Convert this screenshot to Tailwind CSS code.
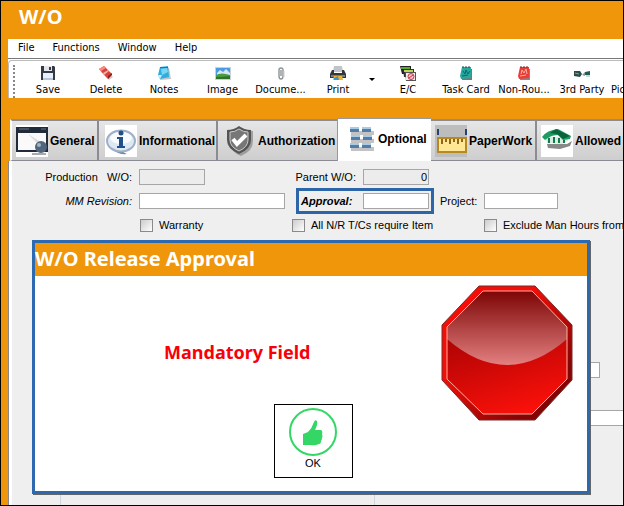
<!DOCTYPE html>
<html lang="en">
<head>
  <meta charset="UTF-8" />
  <meta name="viewport" content="width=device-width, initial-scale=1.0" />
  <title>W/O</title>
  <script src="https://cdn.jsdelivr.net/npm/@tailwindcss/browser@4"></script>
</head>
<body class="h-screen overflow-hidden border border-black bg-[#f0960a] text-black font-['Liberation_Sans',sans-serif]">
  <div class="flex h-full flex-col pl-[7px]">

    <h1 class="h-[38px] shrink-0 pl-[11px] text-[20px] leading-[32px] font-bold text-white font-['Noto_Sans',sans-serif]">W/O</h1>

    <!-- Menu bar -->
    <nav class="flex h-5 shrink-0 items-center gap-[18px] border-b border-[#777] bg-white pl-[10px] text-[11px] font-['DejaVu_Sans_Condensed','Noto_Sans',sans-serif]">
      <button>File</button>
      <button>Functions</button>
      <button>Window</button>
      <button>Help</button>
    </nav>

    <!-- Toolbar -->
    <div class="flex h-[39px] shrink-0 overflow-hidden bg-white pt-px text-[11px] leading-[14px] whitespace-nowrap font-['DejaVu_Sans_Condensed','Noto_Sans',sans-serif]">
      <div class="flex grow rounded-tl border-t border-l border-[#bbb]">
        <div class="mt-1 ml-1 mr-[4px] w-[2px] shrink-0 border-l-2 border-dotted border-[#888]"></div>
        <button class="flex w-[58px] shrink-0 flex-col items-center gap-[2px] pt-1">
          <svg width="16" height="16" viewBox="0 0 16 16"><path d="M1 1h13l1 1v13H1z" fill="#343a46"/><path d="M4 1h8v5H4z" fill="#e5e7ea"/><path d="M9 2h2v3H9z" fill="#343a46"/><path d="M3 8h10v7H3z" fill="#e8eefa"/><path d="M3 13h10v2H3z" fill="#b8c4dc"/></svg>
          <span>Save</span>
        </button>
        <button class="flex w-[58px] shrink-0 flex-col items-center gap-[2px] pt-1">
          <svg width="16" height="16" viewBox="0 0 16 16"><path d="M3 7l8 8 4-3-7-8z" fill="#999" opacity=".5"/><path d="M1 4l5-3 8 8-4 5z" fill="#d94238"/><path d="M1 4l5-3 2 2-5 3z" fill="#f58a80"/><path d="M5 8l5-3 1 1-5 4z" fill="#f5b0a8"/><path d="M10 11l4-3v2l-4 4z" fill="#8d211b"/></svg>
          <span>Delete</span>
        </button>
        <button class="flex w-[58px] shrink-0 flex-col items-center gap-[2px] pt-1">
          <svg width="16" height="16" viewBox="0 0 16 16"><path d="M5 4l8-1 2 11-11 1z" fill="#999" opacity=".6"/><path d="M4 2l8-1 1 11-9 2-2-4z" fill="#2eaee0"/><path d="M5 4l6-1 1 4-6 3z" fill="#7bd6f5"/><path d="M2 10l4 0-2 4z" fill="#c9eefa"/><path d="M4 2h8v1H4z" fill="#257694"/></svg>
          <span>Notes</span>
        </button>
        <button class="flex w-[59px] shrink-0 flex-col items-center gap-[2px] pt-1">
          <svg width="16" height="16" viewBox="0 0 16 16"><path d="M0 2h16v13H0z" fill="#c8d3d8"/><path d="M1 3h14v7H1z" fill="#4b9be0"/><path d="M2 8l3-3 3 2 3-3 4 4v2H2z" fill="#d2e8f8"/><path d="M1 10q5-3 14 0v4H1z" fill="#4d9b3b"/><path d="M1 12q7 0 14-1v3H1z" fill="#2d7330"/></svg>
          <span>Image</span>
        </button>
        <button class="flex w-[57px] shrink-0 flex-col items-center gap-[2px] pt-1">
          <svg width="16" height="16" viewBox="0 0 16 16"><path d="M6 5v6q0 3 2 3t2-3V5q0-2-2-2T6 5m2 0v6" fill="none" stroke="#8d9396" stroke-width="1.4"/><path d="M11 6v6" stroke="#ccc"/></svg>
          <span>Docume...</span>
        </button>
        <button class="flex w-[58px] shrink-0 flex-col items-center gap-[2px] pt-1">
          <svg width="16" height="16" viewBox="0 0 16 16"><path d="M4 1h8l1 6H3z" fill="#bfc5cb"/><path d="M2 5h2v3h8V5h2l2 4v4H0V9z" fill="#33363b"/><path d="M1 10h14v2H1z" fill="#777d83"/><path d="M4 11h8l1 4H3z" fill="#f4b321"/><path d="M4 13l4-2 1 4H4z" fill="#3c93d8"/></svg>
          <span>Print</span>
        </button>
        <button class="flex w-3 shrink-0 items-center pl-px" aria-label="Print options">
          <svg width="8" height="4" viewBox="0 0 8 4"><path d="M1 0h6L4 3z"/></svg>
        </button>
        <button class="flex w-[58px] shrink-0 flex-col items-center gap-[2px] pt-1">
          <svg width="16" height="16" viewBox="0 0 16 16"><path d="M0 1h11v8H2z" fill="#222"/><path d="M1 2h9v2H1z" fill="#58a92e"/><path d="M3 4h11v8H4z" fill="#333"/><path d="M4 5h9v2H4z" fill="#b9d65b"/><path d="M5 7h11v9H6z" fill="#555"/><path d="M6 8h9v7H6z" fill="#eceff0"/><circle cx="11" cy="11.500" r="3" fill="#f6c4c9" stroke="#d62c43"/><path d="M9 13l4-3" stroke="#d62c43"/></svg>
          <span>E/C</span>
        </button>
        <button class="flex w-[58px] shrink-0 flex-col items-center gap-[2px] pt-1">
          <svg width="16" height="16" viewBox="0 0 16 16"><path d="M5 4h9v11l-10 0z" fill="#777"/><path d="M4 2l9 0 0 11-10 1-1-3z" fill="#27a79e"/><path d="M5 6l2 3 1-4 2 4 2-3M4 11l6-1" stroke="#086a67" fill="none"/><path d="M4 2h9" stroke="#234c4b" stroke-dasharray="2 1"/></svg>
          <span>Task Card</span>
        </button>
        <button class="flex w-[58px] shrink-0 flex-col items-center gap-[2px] pt-1">
          <svg width="16" height="16" viewBox="0 0 16 16"><path d="M5 4h9v11l-10 0z" fill="#888"/><path d="M4 2l9 0 0 11-10 1-1-3z" fill="#e93d35"/><path d="M5 9l1-4 2 3 2-4 1 5M4 11l6-1" stroke="#ffb0a8" fill="none"/><path d="M4 2h9" stroke="#7d2825" stroke-dasharray="2 1"/></svg>
          <span>Non-Rou...</span>
        </button>
        <button class="flex w-[58px] shrink-0 flex-col items-center gap-[2px] pt-1">
          <svg width="16" height="16" viewBox="0 0 16 16"><path d="M0 6l6 0 2 3-2 3-6-1z" fill="#2b4a4a"/><path d="M1 8l4 1" stroke="#75b4a8"/><path d="M8 10l3-3v4z" fill="#8a9a9a"/><path d="M11 7l5-1v4l-5 0z" fill="#245c56"/><path d="M12 11h4" stroke="#7fb8ae"/></svg>
          <span>3rd Party</span>
        </button>
        <button class="flex w-[58px] shrink-0 flex-col items-start gap-[2px] pt-1">
          <svg width="16" height="16"></svg>
          <span>Pic</span>
        </button>
      </div>
    </div>

    <!-- Tabs -->
    <div class="mt-5 flex h-[43px] shrink-0 items-end overflow-hidden pl-[2px] text-[12px] font-bold whitespace-nowrap" role="tablist">
      <button role="tab" class="flex h-[42px] w-[89px] shrink-0 items-center gap-[2px] border-2 border-b border-[#8b8b93] border-l-white bg-linear-to-b from-[#e6e6e6] to-[#cecece] pl-1">
        <svg width="32" height="32" viewBox="0 0 32 32"><path d="M0 0h32v32H0z" fill="#fff"/><path d="M1 3h30v23H1z" fill="#fafafa" stroke="#222b3a" stroke-width="2"/><path d="M0 2h32v6H0z" fill="#222b3a"/><path d="M3 4h10M25 4h5" stroke="#68758a"/><path d="M12 9l11 11 5-1z" fill="#ddd"/><circle cx="25" cy="22" r="6" fill="#51667d"/><circle cx="23" cy="20" r="2" fill="#a3b4c7"/><path d="M16 29h14" stroke="#aaa" stroke-width="2"/></svg>
        <span>General</span>
      </button>
      <button role="tab" class="flex h-[42px] w-[119px] shrink-0 items-center gap-[2px] border-t-2 border-r-2 border-b border-[#8b8b93] bg-linear-to-b from-[#e6e6e6] to-[#cecece] pl-[6px]">
        <svg width="32" height="32" viewBox="0 0 32 32"><path d="M0 0h32v32H0z" fill="#fff"/><path d="M8 25q6 5 14 4-5-2-5-5z" fill="#718ba6"/><ellipse cx="16" cy="16" rx="14" ry="10.500" fill="#dfe8f2" stroke="#9db0c8" stroke-width="2"/><ellipse cx="16" cy="13" rx="11" ry="6" fill="#f8fbff"/><circle cx="16" cy="8" r="2.500" fill="#214f87"/><path d="M12 12h6v9h2v2h-8v-2h2v-7h-2z" fill="#214f87"/></svg>
        <span>Informational</span>
      </button>
      <button role="tab" class="flex h-[42px] w-[119px] shrink-0 items-center gap-[2px] border-t-2 border-b border-[#8b8b93] bg-linear-to-b from-[#e6e6e6] to-[#cecece] pl-[6px]">
        <svg width="32" height="32" viewBox="0 0 32 32"><path d="M17 2q5 4 12 4v10q0 10-12 15Q7 28 7 16z" fill="#888" opacity=".7"/><path d="M15 1q5 4 12 4v10q0 9-12 14Q3 24 3 15V5q7 0 12-4z" fill="#555"/><path d="M15 4q4 3 9 3v8q0 7-9 11Q6 22 6 15V7q5 0 9-3z" fill="#777" stroke="#ccc"/><path d="M9 14l4 5 9-9" fill="none" stroke="#fff" stroke-width="4"/></svg>
        <span>Authorization</span>
      </button>
      <button role="tab" aria-selected="true" class="flex h-[43px] w-[94px] shrink-0 items-center border-t border-l border-[#999] bg-white pb-[2px] pl-2">
        <svg width="32" height="32" viewBox="0 0 32 32"><path d="M5 8h23v4H5zm0 8h23v4H5zm0 8h23v4H5z" fill="#aaa" opacity=".7"/><path d="M4 4h9v5H4zm12 0h9v5h-9zM5 12h9v5H5zm12 0h9v5h-9zM4 20h9v5H4zm12 0h9v5h-9z" fill="#527da6"/><path d="M4 4h9v2H4zm12 0h9v2h-9zM5 12h9v2H5zm12 0h9v2h-9zM4 20h9v2H4zm12 0h9v2h-9z" fill="#a9cbe5"/></svg>
        <span>Optional</span>
      </button>
      <button role="tab" class="flex h-[42px] w-[106px] shrink-0 items-center gap-[2px] border-t-2 border-r-2 border-b border-[#8b8b93] bg-linear-to-b from-[#e6e6e6] to-[#cecece] pl-1">
        <svg width="32" height="32" viewBox="0 0 32 32"><path d="M0 0h32v32H0z" fill="#bdbdbd"/><path d="M3 4v6m28-6v6" stroke="#26436f" stroke-width="2"/><path d="M3 13h28v14H3z" fill="#ffe795" stroke="#b68a22" stroke-width="2"/><path d="M7 14v5m4-5v3m4-3v5m4-5v3m4-3v5m4-5v3" stroke="#92651a" stroke-width="2"/></svg>
        <span>PaperWork</span>
      </button>
      <button role="tab" class="flex h-[42px] w-[119px] shrink-0 items-center gap-[2px] border-t-2 border-b border-[#8b8b93] bg-linear-to-b from-[#e6e6e6] to-[#cecece] pl-1">
        <svg width="32" height="32" viewBox="0 0 32 32"><path d="M0 0h32v32H0z" fill="#fff"/><path d="M6 19h20l5-3-2 5-10 3-12-1z" fill="#888"/><path d="M4 12h18l5-1v5l-6 3-15-1z" fill="#d4eee2"/><path d="M1 12q5-7 16-8l13 7-1 3-7 1-5-5q-6 0-10 3l-3 2z" fill="#1d9b60"/><path d="M15 4l14 7-7 3-6-5-7-1z" fill="#0b643c"/><path d="M8 13v5m5-6v6m5-5v5m5-3v3" stroke="#16794a" stroke-width="2"/></svg>
        <span>Allowed</span>
      </button>
    </div>

    <!-- Form panel -->
    <main class="relative ml-px grow border-l-3 border-white bg-[#efefef] pt-2 text-[11px] leading-4 whitespace-nowrap shadow-[-1px_0_0_#888]">
      <div class="flex items-center gap-[7px]">
        <label for="wo" class="w-[120px] text-right">Production &nbsp; W/O:</label>
        <input id="wo" disabled class="h-4 w-[66px] border border-[#a6a6a6] bg-[#ececec]" />
        <label for="parent" class="w-[144px] text-right">Parent W/O:</label>
        <input id="parent" value="0" readonly class="h-4 w-[66px] border border-[#a6a6a6] bg-[#ececec] px-px text-right" />
      </div>
      <div class="mt-[3px] flex items-center">
        <label for="revision" class="mr-[7px] w-[120px] text-right italic">MM Revision:</label>
        <input id="revision" class="h-4 w-[146px] border border-[#a6a6a6] bg-white" />
        <div class="ml-[11px] flex h-[26px] w-[138px] items-center justify-between border-3 border-[#2c66a8] pr-[2px] pl-[2px]">
          <label for="approval" class="font-bold italic">Approval:</label>
          <input id="approval" class="h-4 w-[66px] border border-[#a6a6a6] bg-white" />
        </div>
        <label for="project" class="mr-[7px] ml-[6px]">Project:</label>
        <input id="project" class="h-4 w-[74px] border border-[#a6a6a6] bg-white" />
      </div>
      <div class="mt-[3px] flex items-center overflow-hidden pl-[128px]">
        <label class="flex w-[152px] shrink-0 items-center gap-[6px]"><input type="checkbox" class="size-[13px] appearance-none border border-[#8a8a8a] bg-linear-to-br from-[#ccc] to-white" />Warranty</label>
        <label class="flex w-[192px] shrink-0 items-center gap-[6px]"><input type="checkbox" class="size-[13px] appearance-none border border-[#8a8a8a] bg-linear-to-br from-[#ccc] to-white" />All N/R T/Cs require Item</label>
        <label class="flex shrink-0 items-center gap-[6px]"><input type="checkbox" class="size-[13px] appearance-none border border-[#8a8a8a] bg-linear-to-br from-[#ccc] to-white" />Exclude Man Hours from</label>
      </div>
      <div class="mt-[129px] flex flex-col items-end gap-8">
        <input aria-label="Quantity" class="mr-[23px] h-4 w-20 border border-[#a6a6a6] bg-white" />
        <input aria-label="Remarks" class="h-4 w-1/2 border border-r-0 border-[#a6a6a6] bg-white" />
      </div>
      <div class="mt-4 ml-12 h-20 w-[315px] border-x border-[#cfd6dc]"></div>

      <!-- Release approval dialog -->
      <section role="dialog" aria-labelledby="dialogTitle" class="absolute top-[79px] right-[33px] left-5 border-3 border-[#2c69b0] bg-white shadow-[1px_1px_0_#666]">
        <h2 id="dialogTitle" class="h-[33px] bg-[#f0960a] text-[20px] leading-[32px] font-bold text-white font-['Noto_Sans',sans-serif]">W/O Release Approval</h2>
        <div class="grid grid-cols-[1fr_auto_1fr] grid-rows-[128px_87px] pl-1">
          <p class="col-span-2 flex items-center justify-end pt-6 pr-[42px] text-[18px] font-bold text-[#f80008] font-['Noto_Sans',sans-serif]">Mandatory Field</p>
          <svg class="col-start-3 row-span-2 row-start-1 mt-[9px] mr-[14px] justify-self-end" width="132" height="136" viewBox="0 0 132 136">
            <defs>
              <linearGradient id="rim" x1="0" y1="0" x2="1" y2="1"><stop offset=".35" stop-color="#f50e08"/><stop offset=".8" stop-color="#820404"/></linearGradient>
              <linearGradient id="face" x1=".3" y1="0" x2=".6" y2="1"><stop offset=".3" stop-color="#b00404"/><stop offset="1" stop-color="#fa100a"/></linearGradient>
              <linearGradient id="gloss" x1="0" y1="0" x2="0" y2="1"><stop offset="0" stop-color="#7d0505"/><stop offset="1" stop-color="#e38080"/></linearGradient>
            </defs>
            <path d="M38 1h56l37 39v55l-37 40H38L1 95V40z" fill="url(#rim)" stroke="#7a2a24"/>
            <path d="M42 6h49l35 36v52l-35 35H42L6 94V42z" fill="url(#face)"/>
            <path d="M42 6h49l35 36v12Q66 106 6 54V42z" fill="url(#gloss)"/>
            <path d="M42 6h49l35 36v52l-35 35H42L6 94V42z" fill="none" stroke="#ffb0a0"/>
          </svg>
          <button class="col-start-2 row-start-2 flex h-[74px] w-[79px] flex-col items-center border border-black bg-white pt-[3px] text-[11px] leading-[14px]">
            <svg width="48" height="48" viewBox="0 0 48 48"><circle cx="24" cy="24" r="23" fill="none" stroke="#34d765" stroke-width="2"/><path d="M14 26l5-2q4-4 6-10 1-3 3-1 1 3-2 9h6q2 1 1 4 1 2 0 4 0 2-1 3 0 3-2 3-4 2-9 1l-7 0z" fill="#34d765"/></svg>
            <span>OK</span>
          </button>
        </div>
      </section>
    </main>
  </div>
</body>
</html>
